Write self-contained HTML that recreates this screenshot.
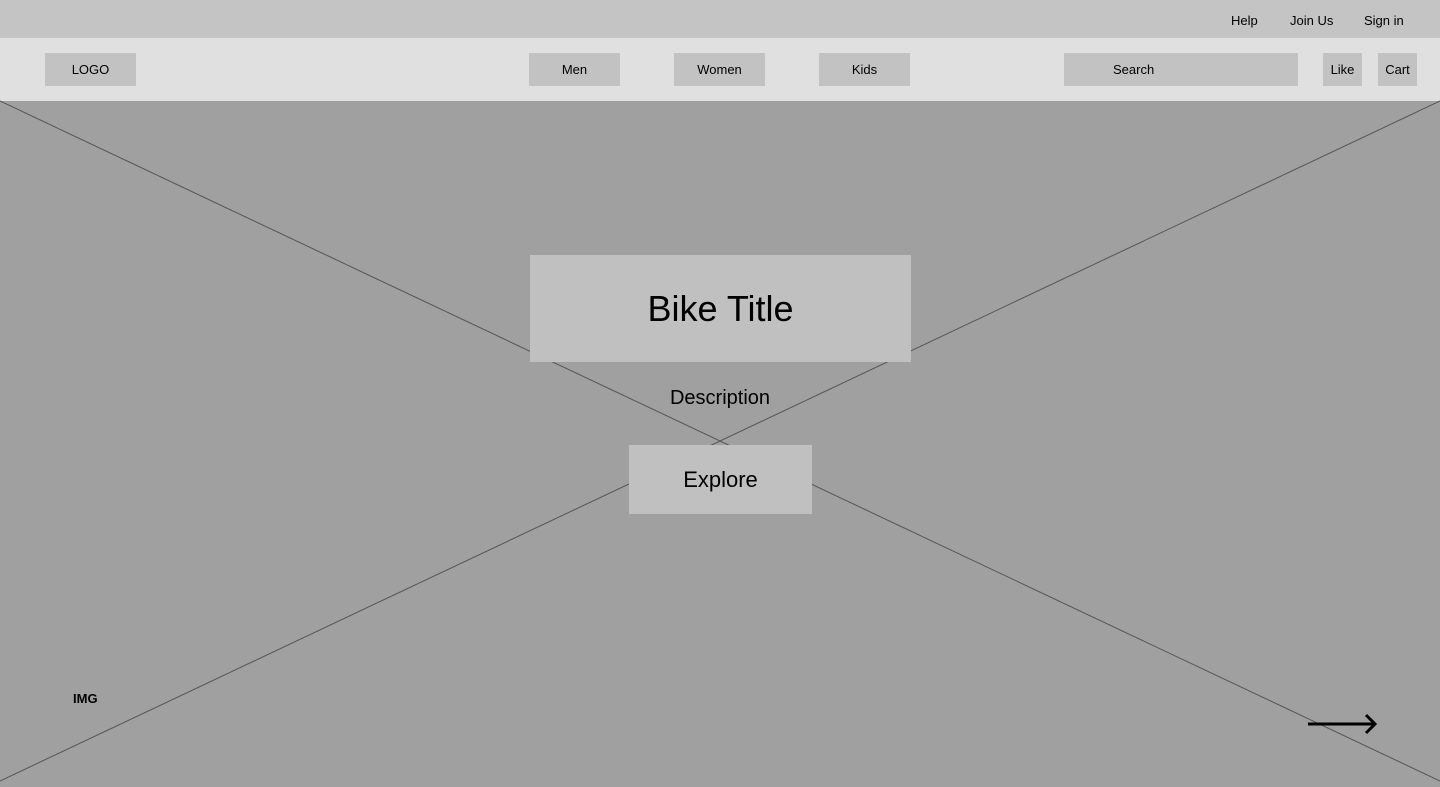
<!DOCTYPE html>
<html><head><style>
*{margin:0;padding:0;box-sizing:border-box}
body{width:1440px;height:787px;overflow:hidden;font-family:"Liberation Sans",Roboto,sans-serif;background:#a0a0a0;position:relative;color:#000}
.top{position:absolute;left:0;top:0;width:1440px;height:38px;background:#c4c4c4}
.nav{position:absolute;left:0;top:38px;width:1440px;height:63px;background:#e0e0e0}
.t{position:absolute;font-size:13px;line-height:16px}
.b{position:absolute;background:#c2c2c2;font-size:13px;display:flex;align-items:center;justify-content:center}
svg{position:absolute;left:0;top:0}
</style></head><body>
<div class="top"></div>
<div class="t" style="left:1231px;top:13px">Help</div>
<div class="t" style="left:1290px;top:13px">Join Us</div>
<div class="t" style="left:1364px;top:13px">Sign in</div>
<div class="nav"></div>
<div class="b" style="left:45px;top:53px;width:91px;height:33px">LOGO</div>
<div class="b" style="left:529px;top:53px;width:91px;height:33px">Men</div>
<div class="b" style="left:674px;top:53px;width:91px;height:33px">Women</div>
<div class="b" style="left:819px;top:53px;width:91px;height:33px">Kids</div>
<div class="b" style="left:1064px;top:53px;width:234px;height:33px;justify-content:flex-start;padding-left:49px">Search</div>
<div class="b" style="left:1323px;top:53px;width:39px;height:33px">Like</div>
<div class="b" style="left:1378px;top:53px;width:39px;height:33px">Cart</div>
<svg width="1440" height="787">
<line x1="0" y1="101" x2="1440" y2="781" stroke="#555" stroke-width="1"/>
<line x1="1440" y1="101" x2="0" y2="781" stroke="#555" stroke-width="1"/>
<path d="M1308 724H1375M1366 715L1375 724L1366 733" stroke="#000" stroke-width="3" fill="none"/>
</svg>
<div class="b" style="left:530px;top:255px;width:381px;height:107px;background:#c0c0c0;font-size:36px">Bike Title</div>
<div class="t" style="left:0;width:1440px;text-align:center;top:386px;font-size:20px;line-height:24px">Description</div>
<div class="b" style="left:629px;top:445px;width:183px;height:69px;background:#c0c0c0;font-size:22px">Explore</div>
<div class="t" style="left:73px;top:691px;font-weight:bold">IMG</div>
</body></html>
